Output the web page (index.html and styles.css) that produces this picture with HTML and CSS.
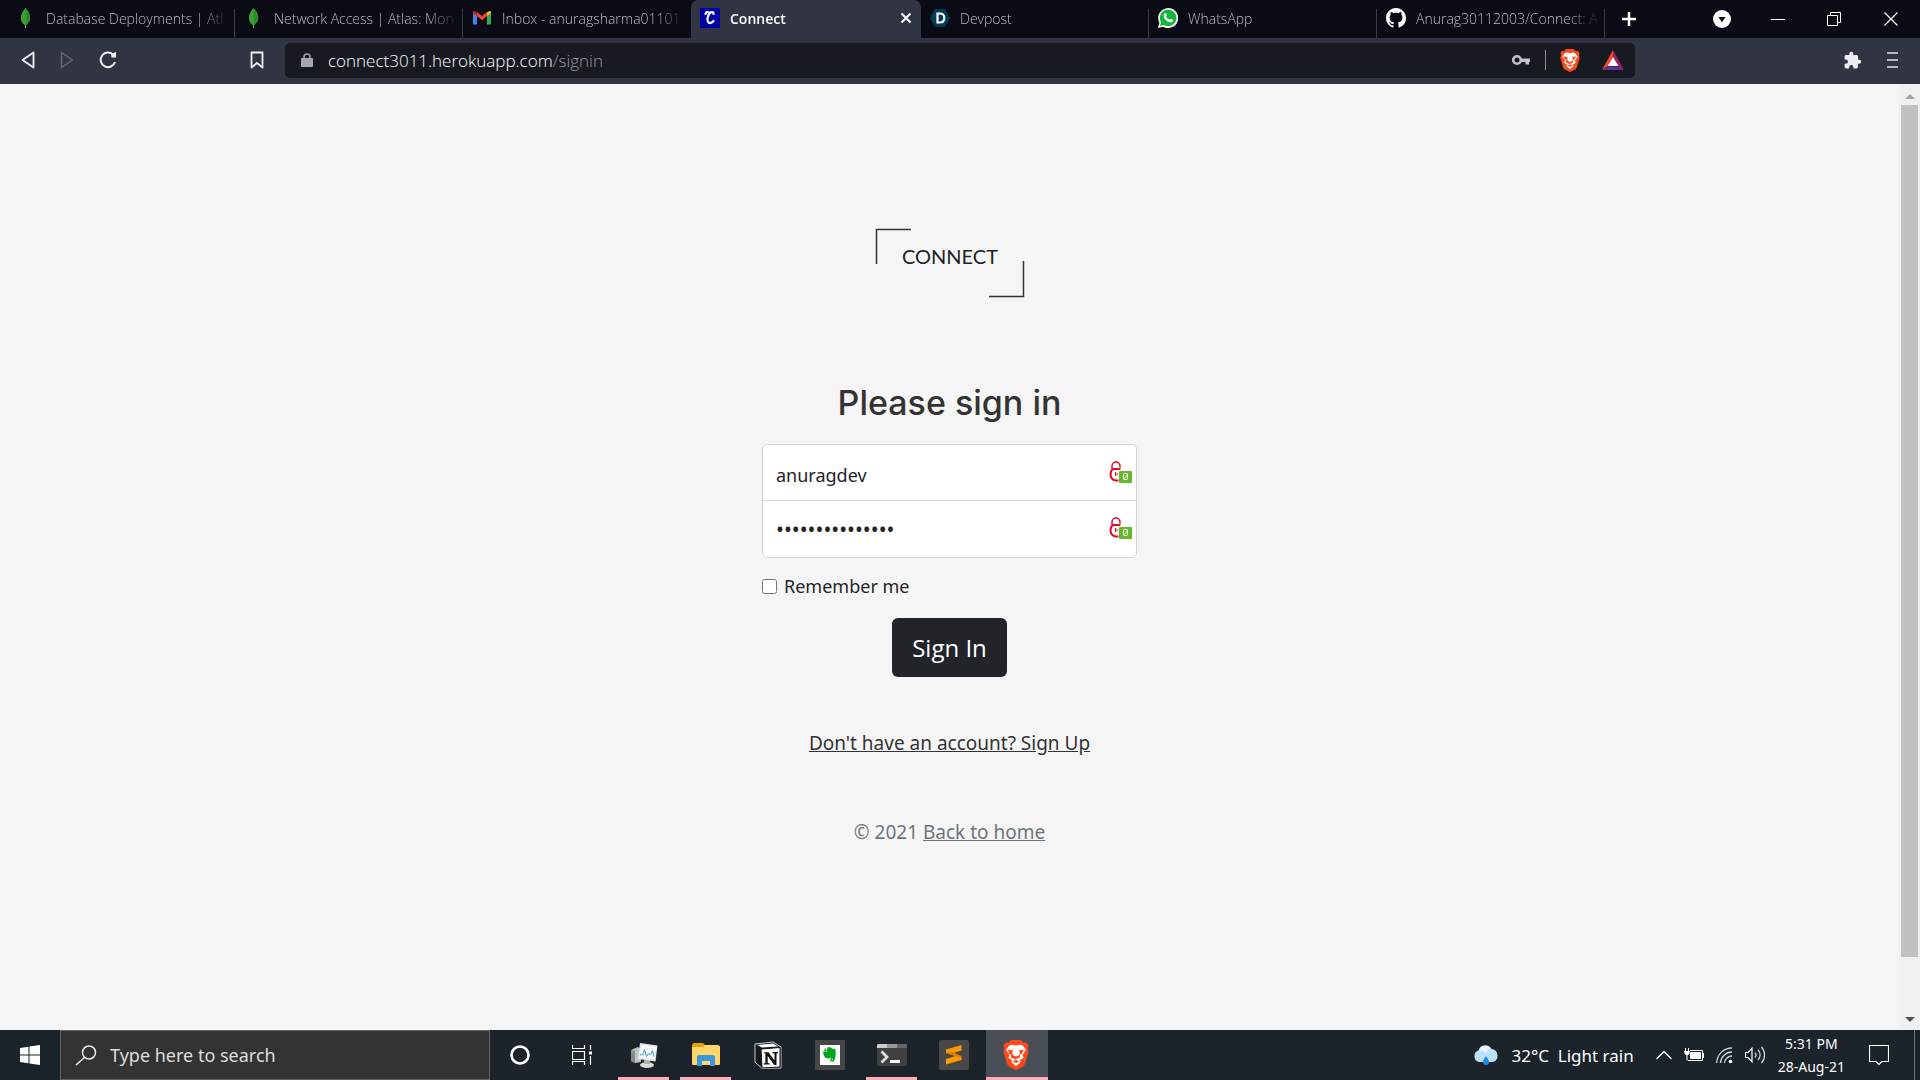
FILE: index.html
```html
<!DOCTYPE html>
<html lang="en">
<head>
<meta charset="utf-8">
<title>Connect</title>
<meta name="viewport" content="width=device-width, initial-scale=1">
<link rel="stylesheet" href="styles.css">
</head>
<body>
<svg width="0" height="0" class="defs" aria-hidden="true">
  <symbol id="leaf" viewBox="0 0 20 20"><path d="M9.500 0C13 4 14.500 7 14 11c-.4 3-2.500 5-4 6.200L9.800 20h-.7l-.2-2.800C6.500 15.500 4.800 13 4.800 9.500 4.800 6 7 3 9.500 0z" fill="#3fa037"/><path d="M9.500 0C13 4 14.500 7 14 11c-.4 3-2.500 5-4 6.200z" fill="#2f8a2d"/><path d="M9 17h1v3H9z" fill="#8f8a72"/></symbol>
  <symbol id="lion" viewBox="0 0 26 30"><path d="M8 0h10l2.500 2.800L23 2.300l2.600 3.200-1 2.500 1.200 3.500-4 12.500c-.6 1.500-1.500 2.300-2.800 3.200L13 30l-6-2.800c-1.300-.9-2.200-1.700-2.800-3.200L.2 11.500 1.400 8l-1-2.500L3 2.300l2.500.5z" fill="#fb4a1c"/><path d="M13 5.500l4.500-.8 2.500 1.100 2.800 4-3.300 5.200 1 3-4 2.200 1.500 1.500-5 4.300-5-4.300 1.500-1.500-4-2.200 1-3-3.300-5.200 2.800-4 2.500-1.100z" fill="#fff"/><path d="M5 9.500l5.500 1.200L9 12.500l1.200 3L13 16.500l2.800-1 1.200-3-1.500-1.800 5.500-1.200-2.300 4.300-2 1 .3 3-3 .7-1 1h-1.300l-1-1-3-.7.300-3-2-1zM9.500 21.500L13 20l3.500 1.500L13 23z" fill="#fb4a1c"/><path d="M12.300 10h1.400l.8 6h-3z" fill="#fff"/></symbol>
  <symbol id="padlock" viewBox="0 0 23 22"><path d="M3 8V5a4 4 0 0 1 8 0v1.500" fill="none" stroke="#e3062a" stroke-width="1.500"/><path d="M9.500 19.300C5 20.500 1.500 17.500 1.500 13.500c0-2.500 1-4.500 2.500-5.500h7.500" fill="none" stroke="#e3062a" stroke-width="2"/><path d="M6.500 11v4M8 12v2" stroke="#e3062a" stroke-width="1"/><rect x="10" y="10" width="13" height="12" rx="1" fill="#67b72d"/><rect x="14.500" y="12.500" width="4" height="6" rx="1" fill="none" stroke="#fff"/><path d="M15 18l3.500-5" stroke="#fff" stroke-width=".7"/></symbol>
</svg>
<div class="desktop">
  <header class="tabs">
    <div class="tab"><svg class="ico"><use href="#leaf"/></svg><span class="tab-title">Database Deployments | Atl</span></div>
    <div class="tab"><svg class="ico"><use href="#leaf"/></svg><span class="tab-title">Network Access | Atlas: Mon</span></div>
    <div class="tab last-before"><svg class="ico" viewBox="0 0 20 20"><path d="M1 16.500V4.500l4 3v9z" fill="#4285f4"/><path d="M15 16.500v-9l4-3v12z" fill="#34a853"/><path d="M15 8V4.500l2-1.300c1-.5 2 .2 2 1.300v.8z" fill="#fbbc04"/><path d="M5 8.200V4l5 4 5-4v4.200l-5 4z" fill="#ea4335"/><path d="M1 5.300v-.8c0-1.200 1.200-1.800 2-1.300L5 4.500v3.700z" fill="#c5221f"/></svg><span class="tab-title">Inbox - anuragsharma01101</span></div>
    <div class="tab active"><svg class="ico" viewBox="0 0 20 20"><rect width="20" height="20" rx="1" fill="#0000a4"/><path d="M13.500 6c0-2.500-2.500-2.500-4-.5-2 2.500-3 7.500-1 9 1.500 1 3.500.2 5-1.500M5.500 6C6 4 7.500 3.500 9 4.500" fill="none" stroke="#fff" stroke-width="2.200" stroke-linecap="round"/></svg><span class="tab-title">Connect</span><button class="plain" aria-label="Close tab"><svg width="12" height="12" viewBox="0 0 12 12"><path d="M1.500 1.500l9 9M10.500 1.500l-9 9" stroke="#fff" stroke-width="2"/></svg></button></div>
    <div class="tab"><svg class="ico" viewBox="0 0 20 20"><path d="M5 1h10l5 9-5 9H5l-5-9z" fill="#003e54"/><path d="M7.500 5.500h2.300c3 0 4.500 1.700 4.500 4.500s-1.500 4.500-4.500 4.500H7.500z" fill="none" stroke="#fff" stroke-width="2.200"/></svg><span class="tab-title">Devpost</span></div>
    <div class="tab"><svg class="ico" viewBox="0 0 20 20"><path d="M0 20l1.400-5.200A10 10 0 1 1 5.200 18.700z" fill="#fff"/><path d="M2 18l1-3.800A8.300 8.300 0 1 1 5.800 17z" fill="#12b83c"/><path d="M6.800 5.200c.6-.5 1.200-.3 1.500.4l.6 1.500c.1.500-.7 1.100-.8 1.400.8 1.700 2 2.700 3.600 3.300l1.100-1.100 2.200 1c.4.300-.1 1.900-1 2.300-2 1-4.500-.4-6.200-2C5.800 10 4.700 7 6.800 5.200z" fill="#fff"/></svg><span class="tab-title">WhatsApp</span></div>
    <div class="tab"><svg class="ico" viewBox="0 0 16 16"><path fill="#fff" d="M8 0C3.580 0 0 3.580 0 8c0 3.540 2.290 6.530 5.470 7.590.4.070.55-.17.55-.38 0-.19-.01-.82-.01-1.490-2.010.37-2.530-.49-2.690-.94-.09-.23-.48-.94-.82-1.130-.28-.15-.68-.52-.01-.53.63-.01 1.080.58 1.230.82.72 1.210 1.870.87 2.330.66.070-.52.280-.87.510-1.070-1.780-.2-3.640-.89-3.640-3.950 0-.87.310-1.590.82-2.150-.08-.2-.36-1.020.08-2.120 0 0 .67-.21 2.200.82.640-.18 1.320-.27 2-.27s1.360.09 2 .27c1.530-1.040 2.200-.82 2.200-.82.440 1.100.16 1.920.08 2.120.51.560.82 1.270.82 2.150 0 3.070-1.870 3.750-3.650 3.950.29.250.54.730.54 1.480 0 1.070-.01 1.930-.01 2.200 0 .21.150.46.550.38A8.010 8.010 0 0 0 16 8c0-4.420-3.580-8-8-8z"/></svg><span class="tab-title">Anurag30112003/Connect: A</span></div>
    <button class="plain new-tab" aria-label="New tab"><svg width="16" height="16" viewBox="0 0 16 16"><path d="M8 1v14M1 8h14" stroke="#fff" stroke-width="2.500"/></svg></button>
    <div class="window-buttons">
      <button class="plain" aria-label="Search tabs"><svg width="18" height="18" viewBox="0 0 18 18"><circle cx="9" cy="9" r="9" fill="#fff"/><path d="M5.500 7h7L9 12.500z" fill="#0b0b15"/></svg></button>
      <button class="plain" aria-label="Minimize"><svg width="14" height="14" viewBox="0 0 14 14"><path d="M0 7.500h14" stroke="#fff"/></svg></button>
      <button class="plain" aria-label="Restore"><svg width="14" height="14" viewBox="0 0 14 14"><path d="M.5 3.500h10v10H.5zM3.500 3V.5h10v10H11" fill="none" stroke="#fff"/></svg></button>
      <button class="plain" aria-label="Close"><svg width="14" height="14" viewBox="0 0 14 14"><path d="M.5.5l13 13M13.500.5l-13 13" stroke="#fff" stroke-width="1.200"/></svg></button>
    </div>
  </header>

  <nav class="toolbar">
    <div class="nav-buttons">
      <button class="plain" aria-label="Back"><svg width="14" height="18" viewBox="0 0 14 18"><path d="M12.500 1.500v15L1.500 9z" fill="none" stroke="#f2f2f4" stroke-width="1.800" stroke-linejoin="round"/></svg></button>
      <button class="plain" aria-label="Forward"><svg width="14" height="18" viewBox="0 0 14 18"><path d="M1.500 1.500v15l11-7.500z" fill="none" stroke="#686a78" stroke-width="1.500" stroke-linejoin="round"/></svg></button>
      <button class="plain" aria-label="Reload"><svg width="18" height="18" viewBox="0 0 18 18"><path d="M14 3.500A7.300 7.300 0 1 0 16 11" fill="none" stroke="#f2f2f4" stroke-width="2"/><path d="M12 3l5-2v5.500h-4.500z" fill="#f2f2f4"/></svg></button>
    </div>
    <button class="plain" aria-label="Bookmark"><svg width="14" height="18" viewBox="0 0 14 18"><path d="M1.500 1.500h11v15L7 12l-5.500 4.500z" fill="none" stroke="#f2f2f4" stroke-width="1.800" stroke-linejoin="round"/></svg></button>
    <div class="address">
      <svg width="12" height="14" viewBox="0 0 12 14"><rect y="5" width="12" height="9" rx="1" fill="#a4a7b0"/><path d="M3 6V4a3 3 0 0 1 6 0v2" fill="none" stroke="#a4a7b0" stroke-width="1.500"/></svg>
      <span class="url">connect3011.herokuapp.com<span class="path">/signin</span></span>
      <svg width="18" height="12" viewBox="0 0 18 12"><circle cx="5" cy="6" r="3.800" fill="none" stroke="#c2c3c7" stroke-width="2.600"/><path d="M9 4.500h9V8h-1v2.500h-3.500V8H9z" fill="#c2c3c7"/></svg>
      <span class="rule"></span>
      <svg width="20" height="23"><use href="#lion"/></svg>
      <svg class="bat" width="22" height="20" viewBox="0 0 22 20"><path d="M11 0L0 20l5-3.500L11 7z" fill="#ff4724"/><path d="M11 0l11 20-5-3.500L11 7z" fill="#9e1f63"/><path d="M0 20h22l-5-3.500H5z" fill="#662d91"/><path d="M11 7l5.500 9h-11z" fill="#fff"/></svg>
    </div>
    <div class="tools">
      <button class="plain" aria-label="Extensions"><svg width="19" height="19" viewBox="0 0 24 24"><path fill="#ededf0" d="M20.500 11H19V7c0-1.100-.9-2-2-2h-4V3.500a2.500 2.500 0 0 0-5 0V5H4c-1.100 0-2 .9-2 2v3.800h1.500a2.700 2.700 0 0 1 0 5.400H2V20c0 1.100.9 2 2 2h3.800v-1.500a2.700 2.700 0 0 1 5.400 0V22H17c1.100 0 2-.9 2-2v-4h1.500a2.500 2.500 0 0 0 0-5z"/></svg></button>
      <button class="plain" aria-label="Menu"><svg width="11" height="18" viewBox="0 0 11 18"><path d="M0 2h11M0 9h11M0 16h11" stroke="#e4e4e8" stroke-width="1.600"/></svg></button>
    </div>
  </nav>

  <div class="viewport">
    <main class="page">
      <svg class="logo" width="150" height="70" viewBox="0 0 150 70" role="img" aria-label="Connect"><path d="M1.500 36V1.500H36M114 68.500h34.500V33" fill="none" stroke="#333" stroke-width="1.500"/><text x="75" y="36" text-anchor="middle" class="logo-text">CONNECT</text></svg>
      <form class="signin">
        <h1>Please sign in</h1>
        <div class="fields">
          <div class="field"><input type="text" aria-label="Username" value="anuragdev"><svg class="lock" width="23" height="22"><use href="#padlock"/></svg></div>
          <div class="field"><input type="password" aria-label="Password" value="connectpassword"><svg class="lock" width="23" height="22"><use href="#padlock"/></svg></div>
        </div>
        <label class="remember"><input type="checkbox"><span>Remember me</span></label>
        <button class="submit" type="button">Sign In</button>
        <a class="signup" href="#">Don't have an account? Sign Up</a>
        <p class="foot">© 2021 <a href="#">Back to home</a></p>
      </form>
    </main>
    <div class="scrollbar">
      <svg width="10" height="5" viewBox="0 0 10 5"><path d="M0 5l5-5 5 5z" fill="#a3a3a3"/></svg>
      <div class="track"><div class="thumb"></div></div>
      <svg width="10" height="5" viewBox="0 0 10 5"><path d="M0 0l5 5 5-5z" fill="#505050"/></svg>
    </div>
  </div>

  <footer class="taskbar">
    <button class="plain start" aria-label="Start"><svg width="20" height="20" viewBox="0 0 20 20"><path d="M0 3l8.500-1.300v7.800H0zM9.500 1.500L20 0v9.500H9.500zM0 10.500h8.500v7.800L0 17zM9.500 10.500H20V20L9.500 18.500z" fill="#fff"/></svg></button>
    <label class="search"><svg width="22" height="21" viewBox="0 0 22 21"><circle cx="14" cy="7.500" r="6.500" fill="none" stroke="#eee" stroke-width="1.500"/><path d="M9.500 12.500L1 20" stroke="#eee" stroke-width="1.500"/></svg><input type="text" placeholder="Type here to search" aria-label="Type here to search"></label>
    <button class="plain app" aria-label="Cortana"><svg width="20" height="20" viewBox="0 0 20 20"><circle cx="10" cy="10" r="8.500" fill="none" stroke="#fff" stroke-width="2.600"/></svg></button>
    <button class="plain app" aria-label="Task view"><svg width="20" height="20" viewBox="0 0 20 20"><path d="M.5 0v3.500h12V0M.5 6.500h12v8H.5zM.5 20v-3.500h12V20M18.500 0v5M18.500 11v9" fill="none" stroke="#fff" stroke-width="1.200"/><path d="M17 6.500h3v3h-3z" fill="#fff"/></svg></button>
    <button class="plain app open" aria-label="Task Manager"><svg width="28" height="28" viewBox="0 0 28 28"><path d="M1 9l7-3 3 2v13l-6 1-4-2z" fill="#bfc1c2"/><path d="M1 9l4 1v12l-4-2z" fill="#858889"/><path d="M1.500 10h1.500v2H1.500z" fill="#5ac82e"/><ellipse cx="17" cy="24" rx="7" ry="3" fill="#dcdcdc"/><path d="M14 19h6v4h-6z" fill="#adafb0"/><path d="M10 2l17.500 2.500-2 16L8 18z" fill="#e6e8ea"/><path d="M11.500 4L26 6l-1.600 12.500L9.800 16.500z" fill="#f8fbfe"/><path d="M10 14l3-.5 1.500-5 2 7 2-3 2.500 1 1.500-4 1.500 6" fill="none" stroke="#3b96c9"/></svg></button>
    <button class="plain app open" aria-label="File Explorer"><svg width="28" height="24" viewBox="0 0 28 24"><path d="M0 2C0 1 1 0 2 0h9l2 2v4H0z" fill="#e0a008"/><path d="M0 4h11l2-2h13c1 0 2 1 2 2v17c0 1-1 1-2 1H2c-1 0-2 0-2-1z" fill="#ffd667"/><path d="M5 23v-9c0-1 1-2 2-2h14c1 0 2 1 2 2v9h-5v-5h-8v5z" fill="#3a98dc"/></svg></button>
    <button class="plain app" aria-label="Notion"><svg width="28" height="28" viewBox="0 0 28 28"><path d="M1 3l18-2 8 5v21l-19 .5L1 21z" fill="#181818" stroke="#ccc" stroke-width="1"/><path d="M7 8l19-1.500V26L8 27z" fill="#fff" stroke="#111"/><path d="M3 4l16-1.500 5 3L8 6.500z" fill="#fff"/><path d="M10 11.200h4.500l6 8.300v-7l-2-.3V11H24v1.200l-1.500.4V24h-2.300l-6.500-9v7l2 .4v1.200h-6v-1.200l1.700-.4v-9.600l-1.400-.4z" fill="#111"/></svg></button>
    <button class="plain app" aria-label="Evernote"><svg width="30" height="30" viewBox="0 0 30 30"><path d="M0 0h30v30H0z" fill="#464646"/><path d="M5 5h20v20H5z" fill="#fff"/><path d="M12.500 7.500c2-.7 4 0 4.500 1l3 .6c1 .7 1 7-.2 10-.5 1.900-1.200 2.700-2.600 2.600-2.200 0-2.500-2.200-1.600-3.200.7-.8 2-.6 2 .5l-1.200.4c-.3.900 1.200 1.100 1.500.2.500-1.500-1.400-2-2.400-1.800-1 1.200-4.600.6-5.500-.5C8.700 15.700 8 13 8.200 11.500h3.500z" fill="#00a51a"/><path d="M11 8v3H8.500z" fill="#00a51a"/></svg></button>
    <button class="plain app open" aria-label="Terminal"><svg width="30" height="22" viewBox="0 0 30 22"><rect width="30" height="22" rx="1" fill="#404040"/><path d="M0 4V1l1-1h9v4z" fill="#ccc"/><path d="M10 0h10v4H10z" fill="#999"/><path d="M20 0h9l1 1v3H20z" fill="#666"/><path d="M4.500 7.500L10 13l-5.500 5.500" fill="none" stroke="#ddd" stroke-width="2.800"/><path d="M13 16h10v3H13z" fill="#fff"/></svg></button>
    <button class="plain app" aria-label="Sublime Text"><svg width="30" height="30" viewBox="0 0 30 30"><rect width="30" height="30" rx="2" fill="#484848"/><path d="M22.500 5v5.500l-9.500 3 9.500 3V20L7 24.500V19l9.500-3L7 13V9.500z" fill="#ff9800"/><path d="M7 13l5-1.500 10.500 4.500v2L19 17z" fill="#e07f00"/></svg></button>
    <button class="plain app open current" aria-label="Brave"><svg width="26" height="30"><use href="#lion"/></svg></button>
    <div class="tray">
      <div class="weather"><svg width="26" height="20" viewBox="0 0 26 20"><path d="M6 17a6 6 0 0 1-.5-11.500A7 7 0 0 1 18.500 4 6.700 6.700 0 0 1 20 17z" fill="#bde1fb"/><path d="M6 6a7 7 0 0 1 12.500-2c-4 0-5 2-5.500 4-2-2-5-2.500-7-2z" fill="#e8f6ff"/><path d="M13 11c2 3 3 4.500 3 6a3 3 0 0 1-6 0c0-1.500 1-3 3-6z" fill="#2387e4"/></svg><span>32°C&nbsp; Light rain</span></div>
      <svg width="16" height="10" viewBox="0 0 16 10"><path d="M.5 9L8 1.500 15.500 9" fill="none" stroke="#fff" stroke-width="1.300"/></svg>
      <svg width="20" height="14" viewBox="0 0 20 14"><path d="M6.500 4.500h10v6h-10z" fill="#fff" stroke="#fff"/><path d="M4 12.500h14.500v-10H6M19.500 5v5M1.500 0v3M4.500 0v3M0 3.500h6M3 7v5.500" fill="none" stroke="#fff"/><path d="M.5 3h5v3L3 7.500.5 6z" fill="#fff"/></svg>
      <svg width="17" height="17" viewBox="0 0 17 17"><path d="M.7 16A15.300 15.300 0 0 1 16 1M4.500 16A11.500 11.500 0 0 1 16 5M8.500 16A7.500 7.500 0 0 1 16 9" fill="none" stroke="#cfd2d5" stroke-width="1.300"/><circle cx="14.500" cy="14.500" r="1.800" fill="#fff"/></svg>
      <svg width="21" height="18" viewBox="0 0 21 18"><path d="M.5 6.500H3l4-4.200v13.400l-4-4.200H.5z" fill="none" stroke="#fff" stroke-width="1.200"/><path d="M10 6.500a4 4 0 0 1 0 5M13 4a7 7 0 0 1 0 10M16.500 1a12 12 0 0 1 0 16" fill="none" stroke="#d8dadc" stroke-width="1.200"/></svg>
      <div class="clock"><span>5:31 PM</span><span>28-Aug-21</span></div>
      <svg class="notice" width="20" height="20" viewBox="0 0 20 20"><path d="M.5.500h19v16H13l-3 3-3-3H.5z" fill="none" stroke="#fff" stroke-width="1.200"/></svg>
    </div>
  </footer>
</div>
</body>
</html>
```
FILE: styles.css
```css
* { box-sizing: border-box; }
body { margin: 0; font-family: "Noto Sans", "Open Sans", sans-serif; color: #212529; }
svg { display: block; flex: none; }
.defs { position: absolute; }
button, input { font: inherit; color: inherit; }
.plain { display: flex; align-items: center; justify-content: center; padding: 0; border: 0; background: none; }

.desktop { display: grid; grid-template-rows: 38px 46px 1fr 50px; min-height: 100vh; }

/* Tab strip */
.tabs { display: flex; align-items: stretch; padding-left: 7px; background: #0b0b15; min-width: 0; }
.tab { display: flex; flex: 0 1 228px; align-items: center; gap: 10px; min-width: 0; padding: 0 4px 2px 9px; color: #b9b9be; font-family: "Open Sans", sans-serif; font-size: 14px; font-weight: 300; background: linear-gradient(#3b3c40, #3b3c40) right bottom / 1px 29px no-repeat; }
.tab.last-before { background: none; }
.tab.active { flex-basis: 230px; padding-right: 9px; background: #313443; border-radius: 7px 7px 0 0; color: #fff; font-weight: 600; }
.ico { width: 20px; height: 20px; }
.tab-title { flex: 1; min-width: 0; overflow: hidden; white-space: nowrap; mask-image: linear-gradient(to right, #000 82%, transparent); }
.new-tab { width: 48px; }
.window-buttons { display: flex; align-items: center; margin-left: auto; }
.window-buttons .plain { width: 56px; height: 38px; }
.window-buttons .plain:last-child { width: 58px; }

/* Toolbar */
.toolbar { display: flex; align-items: center; background: #313443; padding: 0 22px 2px 21px; }
.nav-buttons { display: flex; gap: 25px; margin-right: 133px; }
.address { display: flex; flex: 0 1 1350px; align-items: center; height: 35px; min-width: 0; margin-left: 21px; padding: 0 11px 0 16px; border-radius: 5px; background: #181a21; color: #fff; font-family: "Open Sans", sans-serif; font-size: 17px; font-weight: 300; }
.url { flex: 1; margin-left: 15px; white-space: nowrap; overflow: hidden; }
.path { color: #999ba1; }
.rule { width: 1px; height: 20px; margin: 0 14px 0 15px; background: #8b8c90; }
.bat { margin-left: 22px; }
.tools { display: flex; gap: 25px; margin-left: auto; }

/* Page */
.viewport { display: flex; background: #f5f5f5; min-height: 0; }
.page { flex: 1; display: flex; flex-direction: column; align-items: center; padding-top: 144px; font-size: 19px; line-height: 30px; }
.logo-text { font-family: Lato, sans-serif; font-size: 20px; fill: #222; }
.signin { display: flex; flex-direction: column; align-items: center; width: 375px; }
h1 { margin: 83px 0 19px; color: #333; font-family: Inter, sans-serif; font-size: 34px; font-weight: 500; line-height: 44px; }
.fields { width: 100%; border: 1px solid #ced4da; border-radius: 5px; background: #fff; overflow: hidden; }
.field { position: relative; display: flex; height: 55px; }
.field + .field { height: 57px; border-top: 1px solid #ced4da; }
.field input { flex: 1; min-width: 0; padding: 5px 40px 0 13px; border: 0; background: none; outline: 0; font-size: 18px; }
.field input[type="password"] { padding-top: 0; font-size: 21px; }
.lock { position: absolute; right: 4px; top: 16px; }
.remember { display: flex; align-items: center; align-self: flex-start; gap: 7px; margin: 13px 0 17px; font-size: 18px; }
.remember input { width: 15px; height: 15px; margin: 0; }
.submit { height: 59px; padding: 0 20px; border: 0; border-radius: 6px; background: #212529; color: #fff; font-family: "Open Sans", sans-serif; font-size: 24px; }
.signup { margin-top: 51px; color: #333; }
.foot { margin: 59px 0 0; color: #6c757d; }
.foot a { color: inherit; }

.scrollbar { display: flex; flex-direction: column; align-items: center; width: 21px; padding: 10px 0 8px; background: #f0f0f0; }
.track { flex: 1; width: 17px; margin: 6px 0; }
.thumb { height: 94%; background: #c1c1c1; }

/* Taskbar */
.taskbar { display: flex; background: #1c232b; color: #fff; font-size: 18px; }
.start { width: 60px; }
.search { display: flex; flex: 0 1 430px; align-items: center; gap: 13px; padding: 0 14px; border: 1px solid #626262; background: #333; }
.search input { flex: 1; min-width: 0; padding: 0; border: 0; background: none; outline: 0; }
.search input::placeholder { color: #ddd; opacity: 1; }
.app { width: 62px; padding: 0 2px 1px 0; }
.open { background: linear-gradient(#ffabb2, #ffabb2) 4px bottom / 51px 3px no-repeat; }
.current { background-color: #4a4f57; background-position: 0 bottom; background-size: 100% 3px; }
.tray { display: flex; align-items: center; margin-left: auto; padding-right: 25px; border-right: 1px solid #6b7076; margin-right: 5px; gap: 12px; }
.weather { display: flex; align-items: center; gap: 13px; margin-right: 10px; white-space: nowrap; font-size: 17px; }
.clock { display: grid; justify-items: center; font-size: 14px; line-height: 23px; }
.notice { margin-left: 12px; }
```
